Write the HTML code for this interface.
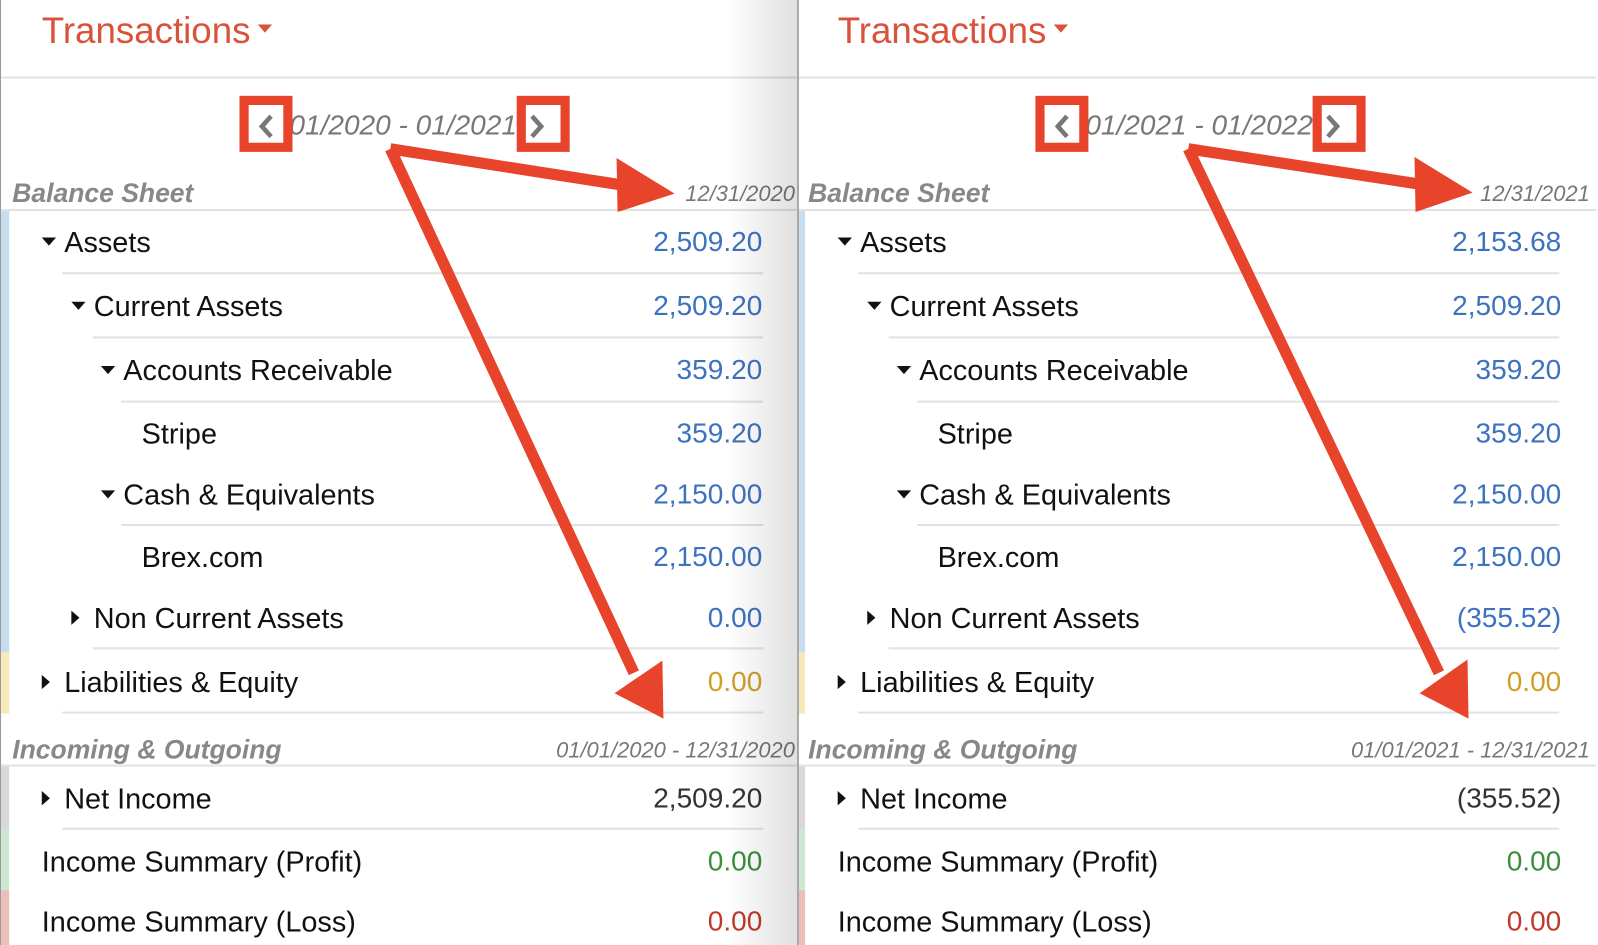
<!DOCTYPE html>
<html><head><meta charset="utf-8"><style>
html,body{margin:0;padding:0;width:1598px;height:945px;overflow:hidden;background:#fff;font-family:"Liberation Sans",sans-serif}
#w{position:absolute;left:0;top:0;width:1568px;height:927px;transform:scale(1.0191,1.0194);transform-origin:0 0}
.p{position:absolute;top:0;width:782px;height:927px;background:#fff;overflow:hidden}
.a{position:absolute;white-space:nowrap}
.t{font-size:36px;color:#d9523b;line-height:36px}
.r{font-size:28.3px;line-height:30px;color:#111}
.v{font-size:27.5px;line-height:30px;right:34px;text-align:right}
.h{font-size:26px;line-height:28px;color:#888;font-weight:bold;font-style:italic}
.d{font-size:21.5px;line-height:24px;color:#777;font-style:italic;right:2px}
.ln{position:absolute;height:2px;background:#e2e2e2}
.bar{position:absolute;left:0;width:8px}
.tri{display:inline-block;width:0;height:0;vertical-align:middle}
.dn{border-left:7px solid transparent;border-right:7px solid transparent;border-top:8px solid #111;margin-right:8px;position:relative;top:-3px}
.rt{border-top:7px solid transparent;border-bottom:7px solid transparent;border-left:8px solid #111;margin-right:14px;position:relative;top:-3px}
.box{position:absolute;border:9px solid #e8432b;width:34px;height:37px;top:94px}
.blue{color:#3d72c0}
.chev{position:absolute;top:111px}
</style></head><body><div id="w">

<!-- LEFT PANEL -->
<div class="p" style="left:0;border-left:1px solid #999;box-sizing:border-box">
<div class="a t" style="left:40px;top:12px">Transactions<span class="tri" style="border-left:7px solid transparent;border-right:7px solid transparent;border-top:8px solid #d9523b;margin-left:7px;position:relative;top:-4px"></span></div>
<div class="ln" style="left:0;right:0;top:75px"></div>
<div class="a" style="left:283px;top:107px;font-size:27.5px;line-height:32px;color:#777;font-style:italic">01/2020 - 01/2021</div>
<div class="box" style="left:234px"></div>
<div class="box" style="left:506px"></div>
<svg class="chev" style="left:250px" width="20" height="26"><path d="M15 3 L6 13 L15 23" fill="none" stroke="#777" stroke-width="4.5"/></svg>
<svg class="chev" style="left:516px" width="20" height="26"><path d="M5 3 L14 13 L5 23" fill="none" stroke="#777" stroke-width="4.5"/></svg>
<div class="a h" style="left:11px;top:175px">Balance Sheet</div>
<div class="a d" style="top:178px">12/31/2020</div>
<div class="ln" style="left:0;right:0;top:205px"></div>
<div class="bar" style="top:207px;height:433px;background:#c6dcef"></div>
<div class="bar" style="top:640px;height:60px;background:#f8e9bb"></div>
<div class="bar" style="top:752px;height:61px;background:#d8d8d8"></div>
<div class="bar" style="top:813px;height:60px;background:#cde8d0"></div>
<div class="bar" style="top:873px;height:60px;background:#ebc0ba"></div>

<div class="a r" style="left:40px;top:222px"><span class="tri dn"></span>Assets</div><div class="a v blue" style="top:222px">2,509.20</div>
<div class="ln" style="left:60px;width:688px;top:267px"></div>
<div class="a r" style="left:69px;top:285px"><span class="tri dn"></span>Current Assets</div><div class="a v blue" style="top:285px">2,509.20</div>
<div class="ln" style="left:90px;width:658px;top:330px"></div>
<div class="a r" style="left:98px;top:348px"><span class="tri dn"></span>Accounts Receivable</div><div class="a v blue" style="top:348px">359.20</div>
<div class="ln" style="left:118px;width:630px;top:393px"></div>
<div class="a r" style="left:138px;top:410px">Stripe</div><div class="a v blue" style="top:410px">359.20</div>
<div class="a r" style="left:98px;top:470px"><span class="tri dn"></span>Cash &amp; Equivalents</div><div class="a v blue" style="top:470px">2,150.00</div>
<div class="ln" style="left:118px;width:630px;top:514px"></div>
<div class="a r" style="left:138px;top:531px">Brex.com</div><div class="a v blue" style="top:531px">2,150.00</div>
<div class="a r" style="left:69px;top:591px"><span class="tri rt"></span>Non Current Assets</div><div class="a v blue" style="top:591px">0.00</div>
<div class="ln" style="left:90px;width:658px;top:635px"></div>
<div class="a r" style="left:40px;top:654px"><span class="tri rt"></span>Liabilities &amp; Equity</div><div class="a v" style="top:654px;color:#cf9f28">0.00</div>
<div class="ln" style="left:60px;width:688px;top:698px"></div>
<div class="a h" style="left:11px;top:721px">Incoming &amp; Outgoing</div>
<div class="a d" style="top:724px">01/01/2020 - 12/31/2020</div>
<div class="ln" style="left:0;right:0;top:750px"></div>
<div class="a r" style="left:40px;top:768px"><span class="tri rt"></span>Net Income</div><div class="a v" style="top:768px;color:#333">2,509.20</div>
<div class="ln" style="left:60px;width:688px;top:812px"></div>
<div class="a r" style="left:40px;top:830px">Income Summary (Profit)</div><div class="a v" style="top:830px;color:#3a8f3a">0.00</div>
<div class="a r" style="left:40px;top:889px">Income Summary (Loss)</div><div class="a v" style="top:889px;color:#c0392b">0.00</div>
<div style="position:absolute;right:0;top:0;width:70px;height:927px;background:linear-gradient(90deg,rgba(0,0,0,0),rgba(0,0,0,0.12))"></div>
</div>

<!-- RIGHT PANEL -->
<div class="p" style="left:782px;border-left:2px solid #a8a8a8;box-sizing:border-box;width:786px">
<div style="position:absolute;left:-2px;top:0;width:784px;height:927px">
<div class="a t" style="left:40px;top:12px">Transactions<span class="tri" style="border-left:7px solid transparent;border-right:7px solid transparent;border-top:8px solid #d9523b;margin-left:7px;position:relative;top:-4px"></span></div>
<div class="ln" style="left:0;right:0;top:75px"></div>
<div class="a" style="left:283px;top:107px;font-size:27.5px;line-height:32px;color:#777;font-style:italic">01/2021 - 01/2022</div>
<div class="box" style="left:234px"></div>
<div class="box" style="left:506px"></div>
<svg class="chev" style="left:250px" width="20" height="26"><path d="M15 3 L6 13 L15 23" fill="none" stroke="#777" stroke-width="4.5"/></svg>
<svg class="chev" style="left:516px" width="20" height="26"><path d="M5 3 L14 13 L5 23" fill="none" stroke="#777" stroke-width="4.5"/></svg>
<div class="a h" style="left:11px;top:175px">Balance Sheet</div>
<div class="a d" style="top:178px;right:6px">12/31/2021</div>
<div class="ln" style="left:0;right:0;top:205px"></div>
<div class="bar" style="top:207px;height:433px;background:#c6dcef"></div>
<div class="bar" style="top:640px;height:60px;background:#f8e9bb"></div>
<div class="bar" style="top:752px;height:61px;background:#d8d8d8"></div>
<div class="bar" style="top:813px;height:60px;background:#cde8d0"></div>
<div class="bar" style="top:873px;height:60px;background:#ebc0ba"></div>

<div class="a r" style="left:40px;top:222px"><span class="tri dn"></span>Assets</div><div class="a v blue" style="top:222px">2,153.68</div>
<div class="ln" style="left:60px;width:688px;top:267px"></div>
<div class="a r" style="left:69px;top:285px"><span class="tri dn"></span>Current Assets</div><div class="a v blue" style="top:285px">2,509.20</div>
<div class="ln" style="left:90px;width:658px;top:330px"></div>
<div class="a r" style="left:98px;top:348px"><span class="tri dn"></span>Accounts Receivable</div><div class="a v blue" style="top:348px">359.20</div>
<div class="ln" style="left:118px;width:630px;top:393px"></div>
<div class="a r" style="left:138px;top:410px">Stripe</div><div class="a v blue" style="top:410px">359.20</div>
<div class="a r" style="left:98px;top:470px"><span class="tri dn"></span>Cash &amp; Equivalents</div><div class="a v blue" style="top:470px">2,150.00</div>
<div class="ln" style="left:118px;width:630px;top:514px"></div>
<div class="a r" style="left:138px;top:531px">Brex.com</div><div class="a v blue" style="top:531px">2,150.00</div>
<div class="a r" style="left:69px;top:591px"><span class="tri rt"></span>Non Current Assets</div><div class="a v blue" style="top:591px">(355.52)</div>
<div class="ln" style="left:90px;width:658px;top:635px"></div>
<div class="a r" style="left:40px;top:654px"><span class="tri rt"></span>Liabilities &amp; Equity</div><div class="a v" style="top:654px;color:#cf9f28">0.00</div>
<div class="ln" style="left:60px;width:688px;top:698px"></div>
<div class="a h" style="left:11px;top:721px">Incoming &amp; Outgoing</div>
<div class="a d" style="top:724px;right:6px">01/01/2021 - 12/31/2021</div>
<div class="ln" style="left:0;right:0;top:750px"></div>
<div class="a r" style="left:40px;top:768px"><span class="tri rt"></span>Net Income</div><div class="a v" style="top:768px;color:#333">(355.52)</div>
<div class="ln" style="left:60px;width:688px;top:812px"></div>
<div class="a r" style="left:40px;top:830px">Income Summary (Profit)</div><div class="a v" style="top:830px;color:#3a8f3a">0.00</div>
<div class="a r" style="left:40px;top:889px">Income Summary (Loss)</div><div class="a v" style="top:889px;color:#c0392b">0.00</div>
</div>
</div>

<!-- ARROWS -->
<svg style="position:absolute;left:0;top:0" width="1568" height="927">
<g fill="#e8432b" stroke="#e8432b">
<line x1="383" y1="146" x2="620" y2="183" stroke-width="11"/>
<polygon points="605,155 662,190 606,208" stroke="none"/>
<line x1="383" y1="146" x2="622" y2="660" stroke-width="11"/>
<polygon points="603,680 650,648 651,705" stroke="none"/>
<line x1="1166" y1="146" x2="1402" y2="182" stroke-width="11"/>
<polygon points="1388,154 1445,189 1389,208" stroke="none"/>
<line x1="1166" y1="146" x2="1412" y2="660" stroke-width="11"/>
<polygon points="1393,680 1440,647 1441,705" stroke="none"/>
</g>
</svg>
</div></body></html>
